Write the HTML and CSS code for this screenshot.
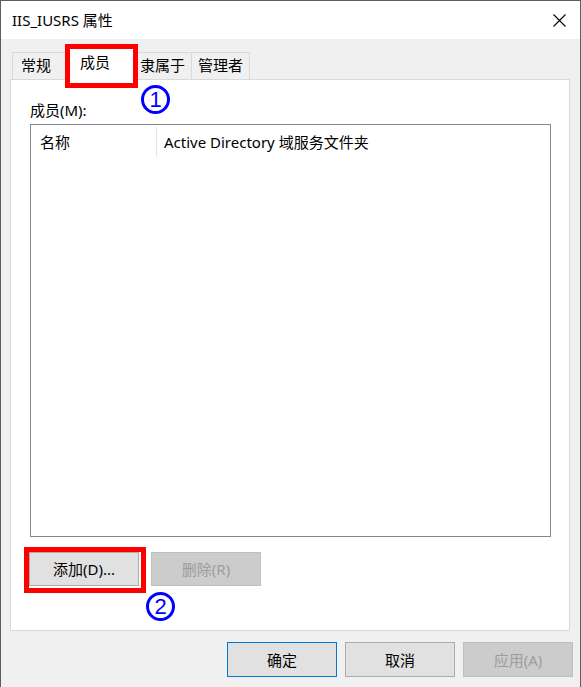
FILE: index.html
```html
<!DOCTYPE html>
<html lang="zh-CN">
<head>
<meta charset="utf-8">
<title>IIS_IUSRS 属性</title>
<link rel="stylesheet" href="styles.css">
</head>
<body>
<div class="window">
  <div class="titlebar">
    <span class="title">IIS_IUSRS 属性</span>
    <svg class="close" width="13" height="13" viewBox="0 0 13 13"><path d="M0.5 0.5 L12.5 12.5 M12.5 0.5 L0.5 12.5" stroke="#000" stroke-width="1.1" fill="none"/></svg>
  </div>
  <div class="content">
    <div class="tabs">
      <div class="tab tab-first">常规</div>
      <div class="tab tab-active">成员</div>
      <div class="tab">隶属于</div>
      <div class="tab">管理者</div>
    </div>
    <div class="panel">
      <div class="label">成员(M):</div>
      <div class="list">
        <div class="list-header">
          <div class="col col-name">名称</div>
          <div class="col col-folder">Active Directory 域服务文件夹</div>
        </div>
      </div>
      <div class="actions">
        <button class="btn">添加(D)...</button>
        <button class="btn btn-disabled">删除(R)</button>
      </div>
    </div>
  </div>
  <div class="footer">
    <button class="btn btn-default">确定</button>
    <button class="btn">取消</button>
    <button class="btn btn-disabled">应用(A)</button>
  </div>

  <div class="mark mark-tab"></div>
  <div class="mark mark-add"></div>
  <div class="num num-1">1</div>
  <div class="num num-2">2</div>
</div>
</body>
</html>
```

FILE: styles.css
```css
* { box-sizing: border-box; }
html, body { margin: 0; padding: 0; background: #f0f0f0; }
body {
  font-family: "Noto Sans", "Noto Sans CJK SC", sans-serif;
  font-size: 15px;
  color: #000;
}
.window {
  position: relative;
  width: 581px;
  height: 687px;
  border: 1px solid #5e5e5e;
  border-bottom: none;
  background: #f0f0f0;
  overflow: hidden;
}
.titlebar {
  height: 38px;
  background: #fff;
  display: flex;
  align-items: center;
  padding-left: 11px;
  padding-right: 14px;
  justify-content: space-between;
}
.title { line-height: 20px; padding-bottom: 1px; }
.close { display: block; }

.content { padding: 8px 10px 0 9px; }
.tabs {
  display: flex;
  align-items: flex-end;
  height: 32px;
  padding-left: 2px;
  position: relative;
  z-index: 1;
}
.tab {
  height: 27px;
  border: 1px solid #d9d9d9;
  border-bottom: none;
  background: #f0f0f0;
  width: 58px;
  text-align: center;
  line-height: 25px;
  white-space: nowrap;
}
.tab + .tab { border-left: none; }
.tab-first { width: 54px; text-align: left; padding-left: 8px; }
.tab-active {
  height: 33px;
  margin-bottom: -1px;
  background: #fff;
  width: 68px;
  text-align: left;
  padding-left: 13px;
  line-height: 28px;
  border-left: 1px solid #d9d9d9 !important;
}
.tab-active + .tab { border-left: none; }

.panel {
  height: 552px;
  background: #fff;
  border: 1px solid #d9d9d9;
  padding: 0 18px 0 19px;
}
.label {
  line-height: 20px;
  padding-top: 20px;
  height: 44px;
}
.list {
  height: 413px;
  border: 1px solid #828790;
  background: #fff;
}
.list-header {
  display: flex;
  height: 30px;
  margin-top: 2px;
  line-height: 30px;
}
.col { white-space: nowrap; }
.col-name {
  width: 126px;
  padding-left: 9px;
  border-right: 1px solid #e5e5e5;
}
.col-folder { padding-left: 7px; }

.actions {
  display: flex;
  gap: 12px;
  margin-top: 15px;
  margin-left: -1px;
}
.btn {
  font: inherit;
  color: #000;
  width: 110px;
  height: 34px;
  background: #e1e1e1;
  border: 1px solid #adadad;
  padding: 0;
  line-height: 30px;
  text-align: center;
}
.btn-disabled {
  background: #cccccc;
  border-color: #bfbfbf;
  color: #9d9d9d;
}
.btn-default { border-color: #0078d7; }

.footer {
  display: flex;
  justify-content: flex-end;
  gap: 8px;
  padding: 11px 7px 0 0;
}
.footer .btn { height: 35px; }

.mark {
  position: absolute;
  z-index: 5;
  border: 5px solid #ff0000;
}
.mark-tab { left: 64px; top: 43px; width: 73px; height: 44px; }
.mark-add { left: 23px; top: 546px; width: 122px; height: 46px; }

.num {
  position: absolute;
  z-index: 5;
  width: 29px;
  height: 29px;
  border: 3px solid #0000ff;
  border-radius: 50%;
  color: #0000ff;
  font-family: "Liberation Sans", sans-serif;
  font-size: 22px;
  line-height: 23px;
  text-align: center;
}
.num-1 { left: 140px; top: 84px; }
.num-2 { left: 145px; top: 591px; }
```
